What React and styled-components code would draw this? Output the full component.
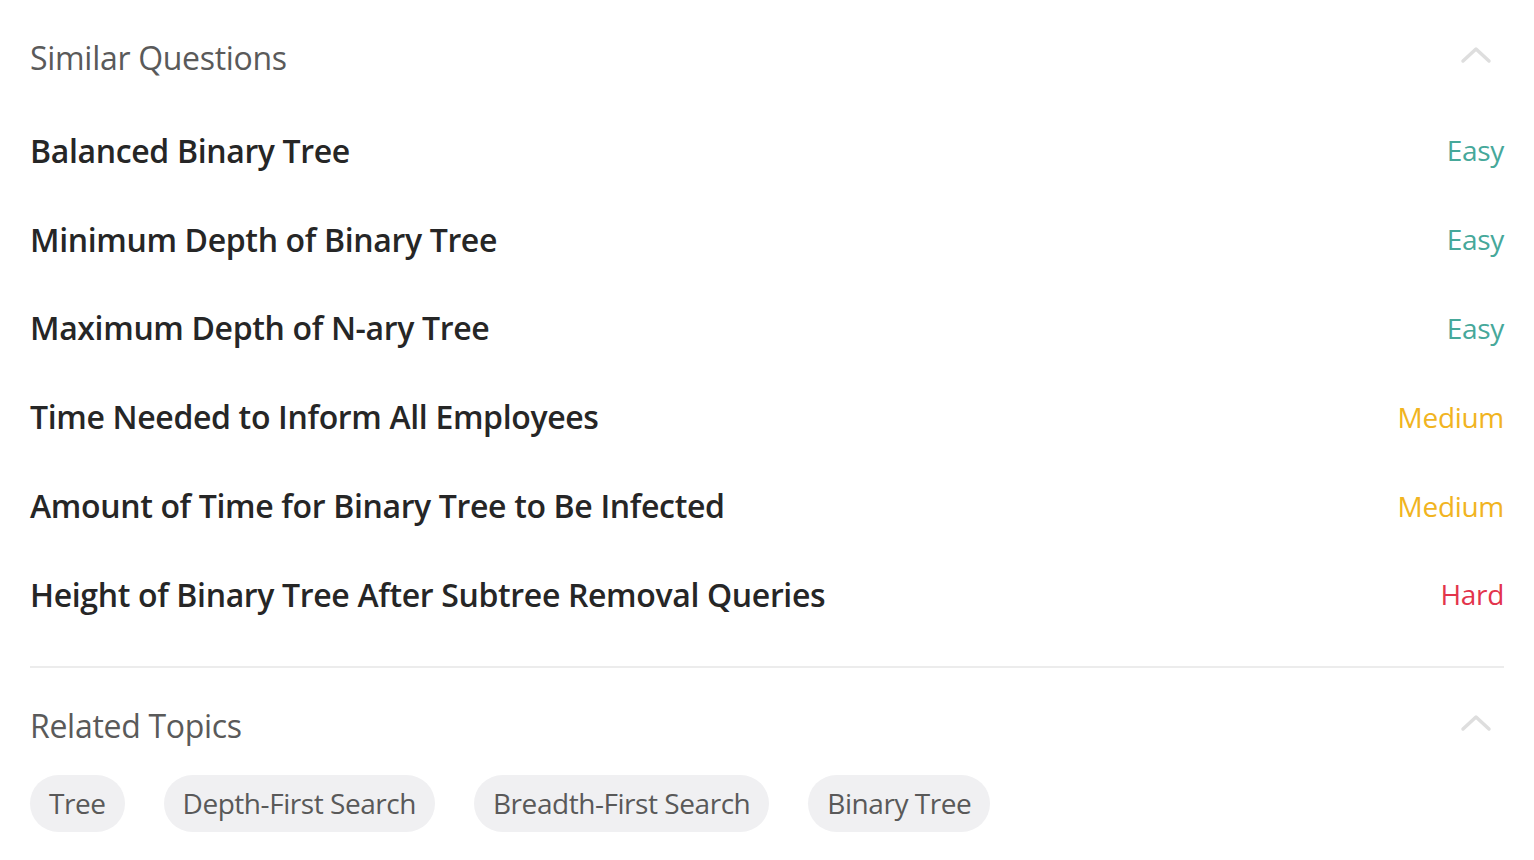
import React from "react";
import styled, { createGlobalStyle } from "styled-components";

const Global = createGlobalStyle`
  html, body { margin: 0; padding: 0; background: #ffffff; }
  body { font-family: "Open Sans", "Noto Sans", "Liberation Sans", sans-serif; }
`;

const Page = styled.div`
  padding: 0 30px;
  width: 1474px;
`;

const Section = styled.section`
  display: flex;
  flex-direction: column;
`;

const SectionHeader = styled.div`
  display: flex;
  align-items: center;
  justify-content: space-between;
  height: ${(p) => p.$h}px;
  padding-top: ${(p) => p.$pt}px;
`;

const SectionTitle = styled.h2`
  margin: 0;
  font-size: 32px;
  font-weight: 400;
  color: #5a5a5a;
  letter-spacing: -0.3px;
`;

const Chevron = styled.svg`
  width: 32px;
  height: 22px;
  margin-right: 12px;
  margin-top: -4px;
`;

const QuestionList = styled.div`
  display: flex;
  flex-direction: column;
`;

const QuestionRow = styled.div`
  display: flex;
  align-items: center;
  justify-content: space-between;
  height: 88.8px;
`;

const QuestionTitle = styled.span`
  font-size: 32px;
  font-weight: 600;
  color: #262626;
  letter-spacing: -0.35px;
`;

const colors = { Easy: "#46a89a", Medium: "#f1b421", Hard: "#e3344b" };

const Difficulty = styled.span`
  font-size: 28px;
  font-weight: 500;
  color: ${(p) => colors[p.$level]};
  letter-spacing: -0.3px;
`;

const Divider = styled.hr`
  border: none;
  border-top: 2px solid #ececec;
  margin: 27px 0 0;
`;

const Chips = styled.div`
  display: flex;
  gap: 39px;
`;

const Chip = styled.span`
  display: inline-flex;
  align-items: center;
  height: 57px;
  padding: 0 19px;
  border-radius: 29px;
  background: #f0f0f2;
  color: #595959;
  font-size: 28px;
  letter-spacing: -0.45px;
`;

const ChevronUp = () => (
  <Chevron viewBox="0 0 32 22">
    <path d="M3 17 L16 5 L29 17" fill="none" stroke="#dedede" strokeWidth="3.5" strokeLinecap="round" strokeLinejoin="round" />
  </Chevron>
);

const questions = [
  ["Balanced Binary Tree", "Easy"],
  ["Minimum Depth of Binary Tree", "Easy"],
  ["Maximum Depth of N-ary Tree", "Easy"],
  ["Time Needed to Inform All Employees", "Medium"],
  ["Amount of Time for Binary Tree to Be Infected", "Medium"],
  ["Height of Binary Tree After Subtree Removal Queries", "Hard"],
];

const topics = ["Tree", "Depth-First Search", "Breadth-First Search", "Binary Tree"];

export default function App() {
  return (
    <>
      <Global />
      <Page>
        <Section>
          <SectionHeader $h={98} $pt={8}>
            <SectionTitle>Similar Questions</SectionTitle>
            <ChevronUp />
          </SectionHeader>
          <QuestionList>
            {questions.map(([t, d]) => (
              <QuestionRow key={t}>
                <QuestionTitle>{t}</QuestionTitle>
                <Difficulty $level={d}>{d}</Difficulty>
              </QuestionRow>
            ))}
          </QuestionList>
        </Section>
        <Divider />
        <Section>
          <SectionHeader $h={99} $pt={8}>
            <SectionTitle>Related Topics</SectionTitle>
            <ChevronUp />
          </SectionHeader>
          <Chips>
            {topics.map((t) => (
              <Chip key={t}>{t}</Chip>
            ))}
          </Chips>
        </Section>
      </Page>
    </>
  );
}
